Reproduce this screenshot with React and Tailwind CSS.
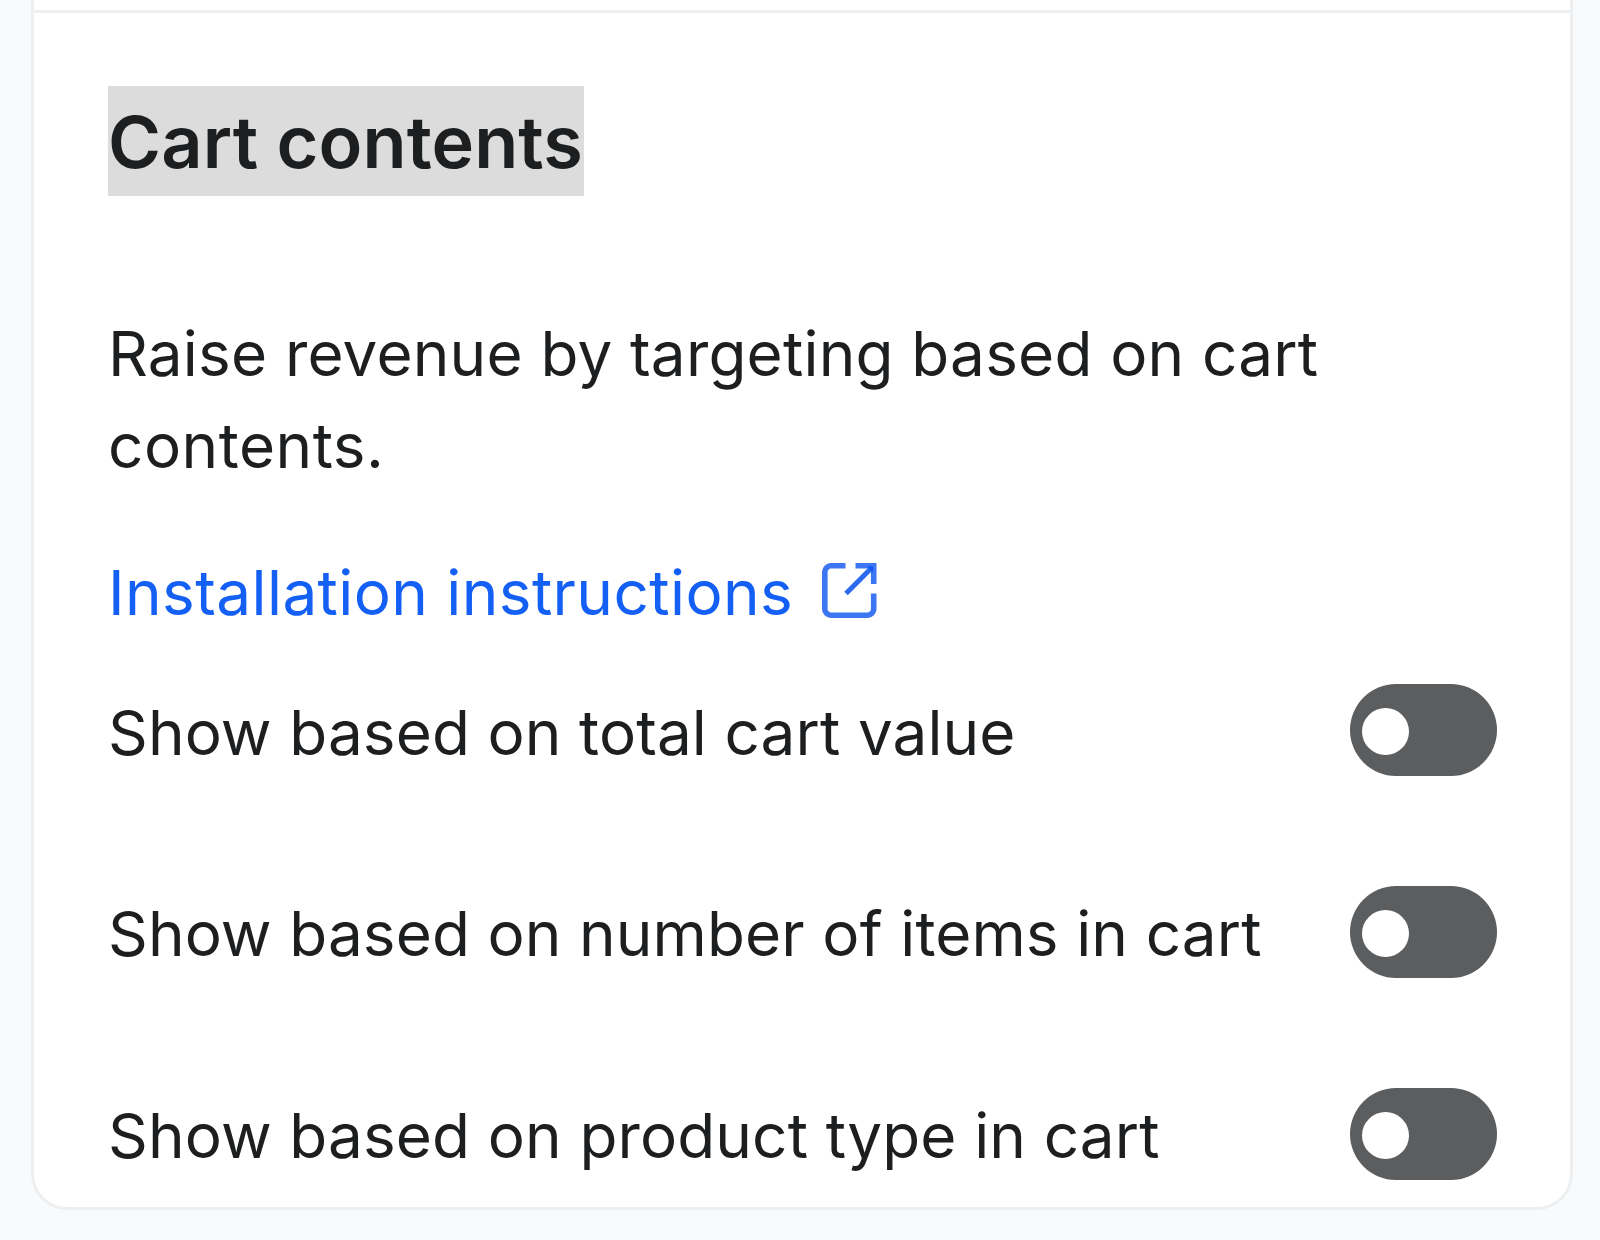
const rows = [
  { label: "Show based on total cart value", tracking: "tracking-[0.11px]" },
  { label: "Show based on number of items in cart", tracking: "tracking-[0.11px]" },
  { label: "Show based on product type in cart", tracking: "tracking-[0.13px]" },
];

function Toggle() {
  return (
    <button
      role="switch"
      aria-checked="false"
      className="flex h-[92px] w-[147px] shrink-0 items-center rounded-full bg-[#5c5d5f] pl-[12px] pt-[3px]"
    >
      <span className="block size-[47px] rounded-full bg-white" />
    </button>
  );
}

function ExternalIcon() {
  return (
    <svg className="mb-[4px] size-[55px] shrink-0" viewBox="0 0 55 55" fill="none" stroke="#3c76f3" strokeWidth="5.6">
      <path d="M23.5 2.8H8.5Q6.5 2.8 4.6 4.8Q2.8 6.6 2.8 8.5V46.5Q2.8 48.4 4.6 50.3Q6.5 52.2 8.5 52.2H46Q48 52.2 49.9 50.3Q51.7 48.4 51.7 46.5V30.5" />
      <path d="M33.5 2.8H51.7V21" />
      <path d="M24 30.5L50.5 4" stroke="#2a6bf2" strokeWidth="5" />
      <path d="M45 3.5H51V9.5Z" fill="#0f57ee" stroke="none" />
    </svg>
  );
}

export default function App() {
  return (
    <div className="flex h-[1240px] w-[1600px] flex-col bg-[#f8fafc] pl-[31px] pr-[27px] font-['Inter',sans-serif] text-[#1c1e20]">
      <section className="flex h-[1210px] flex-col rounded-b-[36px] border-x-[3px] border-b-[3px] border-[#edeff0] bg-white">
        <div className="h-[13px] shrink-0 border-b-[3px] border-[#edeff0]" />
        <div className="flex flex-col pl-[74px] pr-[73px] pt-[73px]">
          <h2 className="flex h-[110px] w-[476px] items-center whitespace-nowrap bg-[#dcdcdc] pt-[2px] text-[72px] font-semibold tracking-[0.12px]">
            Cart contents
          </h2>
          <p className="mt-[112px] whitespace-nowrap text-[62px] leading-[92px]">
            <span className="block tracking-[0.2px]">Raise revenue by targeting based on cart</span>
            <span className="block tracking-[0.5px]">contents.</span>
          </p>
          <a className="mt-[54px] flex h-[92px] items-center gap-[29px] whitespace-nowrap text-[62px] tracking-[0.42px] text-[#1460f5]">
            Installation instructions
            <ExternalIcon />
          </a>
          <div className="mt-[46.4px] flex flex-col gap-[109.6px]">
            {rows.map((r) => (
              <div key={r.label} className="flex h-[92px] items-center justify-between whitespace-nowrap text-[62px]">
                <span className={"pt-[4px] " + r.tracking}>{r.label}</span>
                <Toggle />
              </div>
            ))}
          </div>
        </div>
      </section>
    </div>
  );
}
